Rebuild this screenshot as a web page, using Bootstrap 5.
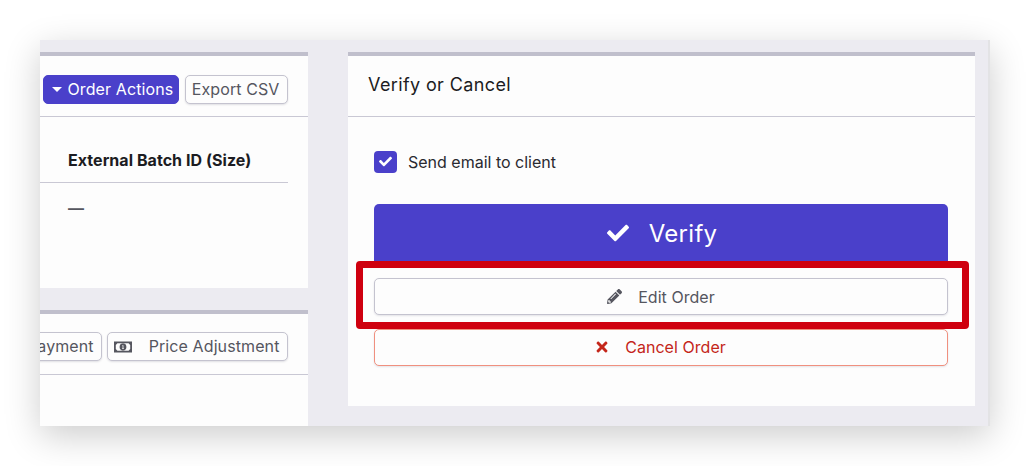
<!doctype html>
<html lang="en">
<head>
<meta charset="utf-8">
<title>Verify or Cancel</title>
<link rel="stylesheet" href="https://cdn.jsdelivr.net/npm/bootstrap@5.3.0/dist/css/bootstrap.min.css">
<style>
html,body{height:466px;overflow:hidden;background:#fff}
body{font-family:Inter,"Liberation Sans",sans-serif;color:#1c1c22;padding:40px 0 0 40px}
.shot{position:relative;width:950px;height:386px;background:#ecebf1;border-right:2px solid #e3e3e5;box-shadow:0 10px 34px rgba(0,0,0,.2);padding:12px 13px 0 0;gap:40px}
.side{width:268px;flex:none;gap:22px;overflow:hidden}
.main{width:627px;flex:none;height:354px}
.pane{background:#fdfdfd;border:0;border-top:4px solid #c0bfcc;border-radius:0}
.pane-a{height:236px;flex:none}
.pane-b{flex:1 1 0;min-height:0}
.pane-head{height:61px;border-bottom:1px solid #c9c8d4;padding:19px 20px 0 0;gap:6px;flex:none}
.pane-b .pane-head{padding-top:18px;gap:5px}
.tbtn{--bs-btn-font-size:16px;--bs-btn-border-radius:5px;padding:0 7.500px 0 5.500px;height:29px;line-height:27px;white-space:nowrap;color:#55565f;background:#fdfdfd;border:1px solid #c4c3cf;box-shadow:0 1px 2px rgba(40,40,70,.14);flex:none;font-weight:400;letter-spacing:.1px}
.tbtn-primary{background:#4a40ca;border-color:#4a40ca;color:#fff;box-shadow:none;padding:0 5px 0 7px}
.caretmark{display:inline-block;width:0;height:0;border-left:5px solid transparent;border-right:5px solid transparent;border-top:5px solid #fff;margin:0 6px 2px 1px;vertical-align:middle}
.batch{width:248px;margin:0;color:#1c1c22}
.batch th{font-size:16px;font-weight:700;padding:32px 0 11px 28px;border-bottom:1px solid #c9c8d4;line-height:22px;background:transparent;letter-spacing:.05px}
.batch td{padding:13px 0 0 28px;border:0;font-size:16px;font-weight:600;color:#55565f;line-height:24px;background:transparent}
.main-head{height:61px;padding:0 0 3px 20px;border-bottom:1px solid #c9c8d4;font-size:18px;font-weight:400;line-height:1.2;flex:none;letter-spacing:.38px}
.main-body{padding:33px 27px 0 26px}
.chk{width:23px;height:22px;background:#4a40ca;border-radius:4px;flex:none}
.chk svg{width:13px;height:13px;fill:#fff}
.chk-row{gap:11px;font-size:16px;height:23px;margin-bottom:31px;color:#2a2a30}
.big-btn{height:58px;background:#4a40ca;border:0;color:#fff;border-radius:5px 5px 0 0;font-size:24px;gap:20px;margin-bottom:16px;letter-spacing:.3px;padding:2px 0 0 2px}
.big-btn svg{width:22px;height:22px;fill:#fff;margin-bottom:2px}
.line-btn{height:37px;border-radius:5px;background:#fdfdfd;font-size:16px;gap:17px;padding:0;box-shadow:0 1px 2px rgba(40,40,70,.12)}
.line-edit{border:1px solid #c4c3cf;color:#55565f;margin-bottom:14px;letter-spacing:.05px;gap:16px}
.line-edit svg{width:15px;height:15px;fill:#55565f}
.line-cancel{border:1px solid #f0907f;color:#c4261a;padding-bottom:2px;letter-spacing:.05px}
.line-cancel svg{width:12px;height:16px;fill:#c4261a}
.money{width:18px;height:12px;margin-right:17px;fill:#55565f;flex:none}
.callout{position:absolute;left:316px;top:221px;width:613px;height:68px;border:7px solid #cf000f;border-radius:4px;pointer-events:none}
</style>
</head>
<body>
<div class="shot d-flex">
  <div class="side d-flex flex-column">
    <section class="card pane pane-a">
      <div class="pane-head d-flex align-items-start justify-content-end">
        <button type="button" class="btn tbtn tbtn-primary"><span class="caretmark"></span>Order Actions</button>
        <button type="button" class="btn tbtn">Export CSV</button>
      </div>
      <table class="table batch">
        <thead><tr><th>External Batch ID (Size)</th></tr></thead>
        <tbody><tr><td>—</td></tr></tbody>
      </table>
    </section>
    <section class="card pane pane-b">
      <div class="pane-head d-flex align-items-start justify-content-end">
        <button type="button" class="btn tbtn">Record Payment</button>
        <button type="button" class="btn tbtn d-inline-flex align-items-center">
          <svg class="money" viewBox="0 0 18 12"><path fill-rule="evenodd" d="M0 .500h18v11H0zM3.400 2.300 1.800 3.900v4.200l1.600 1.600h11.200l1.600-1.600V3.900l-1.600-1.600zM9 2.600a3.400 3.400 0 1 1 0 6.800 3.400 3.400 0 0 1 0-6.800zM8.300 4.300v.8h.3v2.100h-.4V8h1.600v-.8h-.4V4.300z"/></svg>Price Adjustment</button>
      </div>
    </section>
  </div>
  <section class="card pane main">
    <div class="main-head d-flex align-items-center">Verify or Cancel</div>
    <div class="main-body d-flex flex-column">
      <div class="chk-row d-flex align-items-center">
        <span class="chk d-flex align-items-center justify-content-center"><svg viewBox="0 0 512 512"><path d="M173.898 439.404l-166.400-166.400c-9.997-9.997-9.997-26.206 0-36.204l36.203-36.204c9.997-9.998 26.207-9.998 36.204 0L192 312.690 432.095 72.596c9.997-9.997 26.207-9.997 36.204 0l36.203 36.204c9.997 9.997 9.997 26.206 0 36.204l-294.400 294.401c-9.998 9.997-26.207 9.997-36.204-.001z"/></svg></span>
        <span>Send email to client</span>
      </div>
      <button type="button" class="btn big-btn d-flex align-items-center justify-content-center"><svg viewBox="0 0 512 512"><path d="M173.898 439.404l-166.400-166.400c-9.997-9.997-9.997-26.206 0-36.204l36.203-36.204c9.997-9.998 26.207-9.998 36.204 0L192 312.690 432.095 72.596c9.997-9.997 26.207-9.997 36.204 0l36.203 36.204c9.997 9.997 9.997 26.206 0 36.204l-294.400 294.401c-9.998 9.997-26.207 9.997-36.204-.001z"/></svg>Verify</button>
      <button type="button" class="btn line-btn line-edit d-flex align-items-center justify-content-center"><svg viewBox="0 0 512 512"><path d="M497.900 142.100l-46.100 46.100c-4.700 4.700-12.300 4.700-17 0l-111-111c-4.700-4.700-4.700-12.300 0-17l46.100-46.100c18.700-18.700 49.100-18.700 67.900 0l60.100 60.100c18.800 18.700 18.800 49.100 0 67.900zM284.200 99.800L21.600 362.400.4 483.900c-2.900 16.400 11.400 30.600 27.800 27.800l121.500-21.300 262.600-262.600c4.700-4.700 4.700-12.300 0-17l-111-111c-4.800-4.700-12.400-4.700-17.100 0zM124.100 339.900c-5.500-5.500-5.500-14.300 0-19.800l154-154c5.500-5.500 14.300-5.500 19.800 0s5.500 14.300 0 19.800l-154 154c-5.500 5.500-14.300 5.500-19.800 0zM88 424h48v36.300l-64.500 11.300-31.100-31.100L51.700 376H88v48z"/></svg>Edit Order</button>
      <button type="button" class="btn line-btn line-cancel d-flex align-items-center justify-content-center"><svg viewBox="0 0 352 512"><path d="M242.720 256l100.070-100.070c12.280-12.280 12.280-32.190 0-44.480l-22.240-22.240c-12.280-12.280-32.190-12.280-44.480 0L176 189.280 75.930 89.210c-12.280-12.280-32.190-12.280-44.480 0L9.210 111.450c-12.280 12.280-12.280 32.190 0 44.480L109.280 256 9.210 356.070c-12.280 12.280-12.280 32.190 0 44.480l22.240 22.240c12.280 12.280 32.200 12.280 44.480 0L176 322.720l100.070 100.070c12.280 12.280 32.200 12.280 44.480 0l22.240-22.240c12.280-12.280 12.280-32.190 0-44.480L242.720 256z"/></svg>Cancel Order</button>
    </div>
  </section>
  <div class="callout"></div>
</div>
</body>
</html>
